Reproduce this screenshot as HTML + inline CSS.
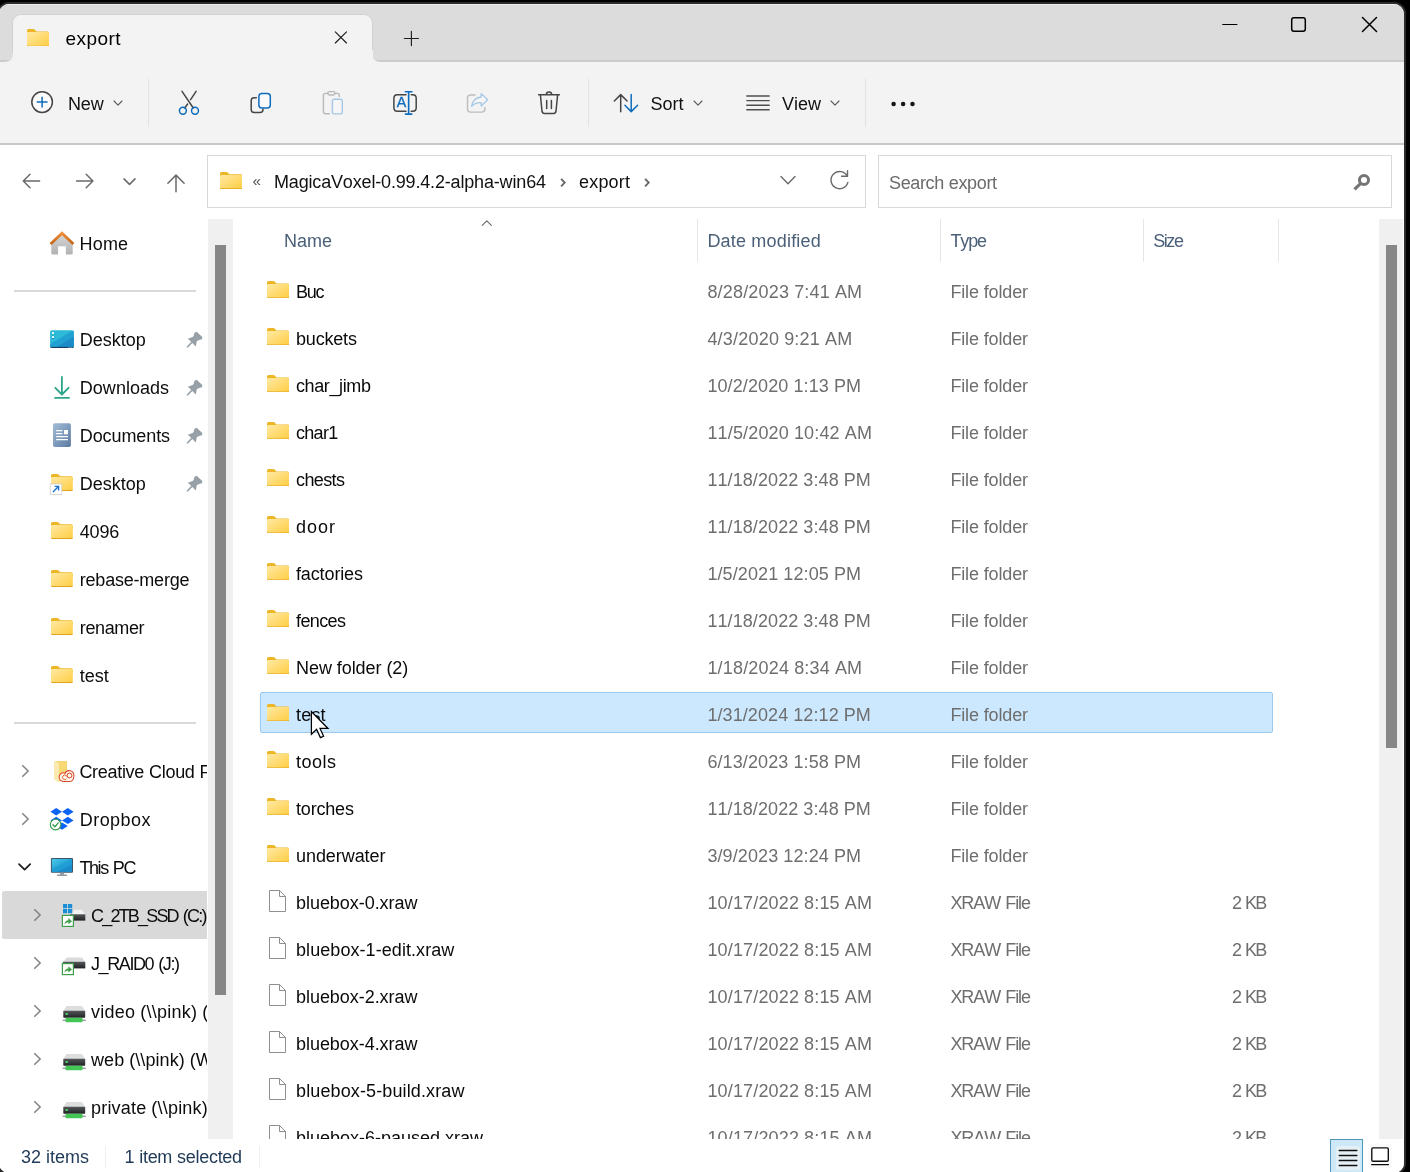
<!DOCTYPE html>
<html lang="en"><head><meta charset="utf-8"><title>export - File Explorer</title>
<style>
html,body{margin:0;padding:0;}
body{width:1410px;height:1172px;background:#000;overflow:hidden;position:relative;font-family:"Liberation Sans", sans-serif;}
.a{position:absolute;display:block;}
.t{position:absolute;white-space:nowrap;line-height:24px;height:24px;font-family:"Liberation Sans", sans-serif;font-kerning:none;}
#win{position:absolute;left:-3px;top:2px;width:1405px;height:1168.6px;border:2px solid #2d2d2d;border-radius:12px;background:#fff;overflow:hidden;box-sizing:content-box;}
#inner{will-change:transform;position:absolute;left:1px;top:-4px;width:1410px;height:1180px;}
</style></head><body>
<div id="win"><div id="inner">
<svg class="a" width="0" height="0" style="left:0;top:0"><defs><linearGradient id="fg" x1="0" y1="0" x2="1" y2="1"><stop offset="0" stop-color="#ffe9a3"/><stop offset="1" stop-color="#ffcd42"/></linearGradient></defs></svg>

<div class="a" style="left:-2px;top:0;width:1412px;height:61px;background:#dcdcdc"></div>
<div class="a" style="left:-2px;top:4px;width:1412px;height:1px;background:#ececec"></div>
<div class="a" style="left:0;top:60px;width:1410px;height:2px;background:#cbcbcb"></div>
<div class="a" style="left:0;top:62px;width:1410px;height:81px;background:#f3f3f3"></div>
<div class="a" style="left:0;top:143px;width:1410px;height:2px;background:#c7c7c7"></div>
<div class="a" style="left:12px;top:14px;width:359px;height:38px;background:#f3f3f3;border-radius:9px 9px 0 0;border:1px solid #d2d2d2;border-bottom:none;box-sizing:content-box"></div>
<div class="a" style="left:13px;top:50px;width:359.6px;height:13px;background:#f3f3f3"></div>
<svg class="a" style="left:4px;top:53px" width="9" height="9" viewBox="0 0 9 9"><path d="M9 0V9H0Q9 9 9 0Z" fill="#f3f3f3"/></svg>
<svg class="a" style="left:372.4px;top:53px" width="9" height="9" viewBox="0 0 9 9"><path d="M0 0V9H9Q0 9 0 0Z" fill="#f3f3f3"/></svg>
<svg class="a" style="left:27.2px;top:28.7px" width="22.2" height="17.8" viewBox="0 0.6 23 17.5" preserveAspectRatio="none"><path d="M0 2.2Q0 0.6 1.6 0.6H6.6Q7.4 0.6 8 1.2L9.8 3H21.4Q23 3 23 4.6V8H0Z" fill="#edb626"/><path d="M0 4.9Q0 3.6 1.3 3.6H21.7Q23 3.6 23 4.9V16.6Q23 17.9 21.7 17.9H1.3Q0 17.9 0 16.6Z" fill="url(#fg)"/><path d="M0 16.2V16.8Q0 18.1 1.3 18.1H21.7Q23 18.1 23 16.8V16.2Q23 17.1 21.7 17.1H1.3Q0 17.1 0 16.2Z" fill="#dfa41f"/></svg>
<span class="t " style="left:65.5px;top:27px;font-size:19px;color:#000;letter-spacing:0.438px;">export</span>
<svg class="a" style="left:332px;top:29px" width="18" height="18" viewBox="332 29 18 18"><path d="M335.3 31.8L346.5 43M346.5 31.8L335.3 43" stroke="#1f1f1f" stroke-width="1.15" fill="none" stroke-linecap="round"/></svg>
<svg class="a" style="left:402px;top:29px" width="20" height="20" viewBox="402 29 20 20"><path d="M411.4 31.4V45.6M404.3 38.5H418.5" stroke="#1f1f1f" stroke-width="1.15" fill="none" stroke-linecap="round"/></svg>
<svg class="a" style="left:1221px;top:16px" width="18" height="18" viewBox="0 0 18 18"><path d="M1.7 8.5H15.9" stroke="#000" stroke-width="1.2" stroke-linecap="round"/></svg>
<svg class="a" style="left:1290px;top:16px" width="18" height="18" viewBox="0 0 18 18"><rect x="1.7" y="1.7" width="13.6" height="13.6" rx="2.2" fill="none" stroke="#000" stroke-width="1.5"/></svg>
<svg class="a" style="left:1361px;top:16px" width="18" height="18" viewBox="0 0 18 18"><path d="M1.5 1.5L15.5 15.5M15.5 1.5L1.5 15.5" stroke="#000" stroke-width="1.5" stroke-linecap="round"/></svg>
<svg class="a" style="left:28px;top:88px" width="30" height="30" viewBox="28 88 30 30"><circle cx="42.1" cy="102.1" r="10.3" fill="#fbfbfb" stroke="#454545" stroke-width="1.5"/><path d="M37.2 102.1H47M42.1 97.2V107" stroke="#0f6cbd" stroke-width="1.5" stroke-linecap="round"/></svg>
<span class="t " style="left:68px;top:92px;font-size:18px;color:#111;letter-spacing:-0.155px;">New</span>
<svg class="a" style="left:113px;top:100px" width="10" height="6.2" viewBox="-1 -1 10 6.2"><path d="M0 0L4.0 4.2L8 0" fill="none" stroke="#5a5a5a" stroke-width="1.1" stroke-linecap="round" stroke-linejoin="round"/></svg>
<div class="a" style="left:148px;top:79px;width:1px;height:48px;background:#e2e2e2"></div>
<svg class="a" style="left:176px;top:88px" width="28" height="30" viewBox="176 88 28 30"><path d="M182 91.3L193.3 108M196.1 91.3L190.6 99.6M187.6 104L184.7 108" stroke="#454545" stroke-width="1.5" stroke-linecap="round" fill="none"/><circle cx="182.9" cy="110.7" r="3.45" fill="none" stroke="#0f6cbd" stroke-width="1.5"/><circle cx="195" cy="110.7" r="3.45" fill="none" stroke="#0f6cbd" stroke-width="1.5"/></svg>
<svg class="a" style="left:248px;top:90px" width="26" height="26" viewBox="248 90 26 26"><path d="M256.3 97.8H254.2Q251.2 97.8 251.2 100.8V109.5Q251.2 112.5 254.2 112.5H260Q263 112.5 263 109.5V109.3" fill="none" stroke="#454545" stroke-width="1.5" stroke-linecap="round"/><rect x="258.9" y="93.5" width="11.4" height="14.4" rx="3" fill="#fafafa" stroke="#0f6cbd" stroke-width="1.5"/></svg>
<svg class="a" style="left:320px;top:88px" width="26" height="30" viewBox="320 88 26 30"><path d="M329.3 113.8H325.6Q323.4 113.8 323.4 111.6V95.4Q323.4 93.4 325.6 93.4H327.8M335 93.4H337.2Q339.3 93.4 339.3 95.4V96.6" fill="none" stroke="#b9b9b9" stroke-width="1.4" stroke-linecap="round"/><rect x="327.8" y="91.6" width="7.2" height="3.4" rx="1.7" fill="none" stroke="#b9b9b9" stroke-width="1.4"/><rect x="332.4" y="99.3" width="9.9" height="14.6" rx="2" fill="#f6f6f6" stroke="#a6c8e6" stroke-width="1.4"/></svg>
<svg class="a" style="left:390px;top:88px" width="30" height="30" viewBox="390 88 30 30"><path d="M406 94.8H397.4Q393.9 94.8 393.9 98.3V107.7Q393.9 111.2 397.4 111.2H406M411.2 94.8H412.7Q416.2 94.8 416.2 98.3V107.7Q416.2 111.2 412.7 111.2H411.2" fill="none" stroke="#454545" stroke-width="1.5" stroke-linecap="round"/><path d="M405.4 91.8H411.9M405.4 114.1H411.9M408.65 91.8V114.1" stroke="#0f6cbd" stroke-width="1.6" stroke-linecap="round" fill="none"/><text x="401.4" y="107.2" font-family="Liberation Sans, sans-serif" font-size="14.2" text-anchor="middle" fill="#0f6cbd" stroke="#0f6cbd" stroke-width="0.35">A</text></svg>
<svg class="a" style="left:464px;top:90px" width="28" height="26" viewBox="464 90 28 26"><path d="M475 95H470.6Q467.5 95 467.5 98V109Q467.5 112.1 470.6 112.1H481.8Q484.9 112.1 484.9 109V107.5" fill="none" stroke="#bdbdbd" stroke-width="1.4" stroke-linecap="round"/><path d="M481.2 93.6L487.6 99.8L481.2 106V102.6Q475.5 102 471.6 106.4Q472.6 98.2 481.2 97Z" fill="#f6f6f6" stroke="#a6c8e6" stroke-width="1.3" stroke-linejoin="round"/></svg>
<svg class="a" style="left:535px;top:88px" width="28" height="30" viewBox="535 88 28 30"><path d="M538.6 94.8H559.4M546.3 94.6Q546.3 91.9 549 91.9Q551.7 91.9 551.7 94.6M540.4 95L542 111.2Q542.3 113.4 544.5 113.4H553.5Q555.7 113.4 556 111.2L557.6 95M546.7 100.6V108.4M551.4 100.6V108.4" fill="none" stroke="#454545" stroke-width="1.5" stroke-linecap="round" stroke-linejoin="round"/></svg>
<div class="a" style="left:588px;top:79px;width:1px;height:48px;background:#e2e2e2"></div>
<svg class="a" style="left:611px;top:90px" width="30" height="26" viewBox="611 90 30 26"><path d="M620.7 111.7V94.7M614.3 101L620.7 94.6L627.1 101" fill="none" stroke="#454545" stroke-width="1.5" stroke-linecap="round" stroke-linejoin="round"/><path d="M631.2 94.6V111.6M624.9 105.3L631.2 111.6L637.6 105.3" fill="none" stroke="#0f6cbd" stroke-width="1.5" stroke-linecap="round" stroke-linejoin="round"/></svg>
<span class="t " style="left:650.5px;top:92px;font-size:18px;color:#111;letter-spacing:-0.004px;">Sort</span>
<svg class="a" style="left:693px;top:100px" width="10" height="6.2" viewBox="-1 -1 10 6.2"><path d="M0 0L4.0 4.2L8 0" fill="none" stroke="#5a5a5a" stroke-width="1.1" stroke-linecap="round" stroke-linejoin="round"/></svg>
<svg class="a" style="left:744px;top:92px" width="28" height="22" viewBox="744 92 28 22"><path d="M746.8 96H769.2M746.8 100.6H769.2M746.8 105.2H769.2M746.8 109.8H769.2" stroke="#4f4f4f" stroke-width="1.4" stroke-linecap="round"/></svg>
<span class="t " style="left:782px;top:92px;font-size:18px;color:#111;letter-spacing:-0.005px;">View</span>
<svg class="a" style="left:830px;top:100px" width="10" height="6.2" viewBox="-1 -1 10 6.2"><path d="M0 0L4.0 4.2L8 0" fill="none" stroke="#5a5a5a" stroke-width="1.1" stroke-linecap="round" stroke-linejoin="round"/></svg>
<div class="a" style="left:865px;top:79px;width:1px;height:48px;background:#e2e2e2"></div>
<svg class="a" style="left:888px;top:98px" width="30" height="12" viewBox="888 98 30 12"><circle cx="893.6" cy="103.9" r="2.25" fill="#151515"/><circle cx="903.1" cy="103.9" r="2.25" fill="#151515"/><circle cx="912.5" cy="103.9" r="2.25" fill="#151515"/></svg>
<svg class="a" style="left:20px;top:170px" width="24" height="22" viewBox="20 170 24 22"><path d="M39.6 181H23.4M30 174.3L23.3 181L30 187.7" fill="none" stroke="#6a6a6a" stroke-width="1.5" stroke-linecap="round" stroke-linejoin="round"/></svg>
<svg class="a" style="left:74px;top:170px" width="24" height="22" viewBox="74 170 24 22"><path d="M76.6 181H92.8M86.2 174.3L92.9 181L86.2 187.7" fill="none" stroke="#6a6a6a" stroke-width="1.5" stroke-linecap="round" stroke-linejoin="round"/></svg>
<svg class="a" style="left:121px;top:174px" width="18" height="14" viewBox="121 174 18 14"><path d="M124 178.9L129.5 184.4L135 178.9" fill="none" stroke="#6a6a6a" stroke-width="1.5" stroke-linecap="round" stroke-linejoin="round"/></svg>
<svg class="a" style="left:164px;top:170px" width="24" height="26" viewBox="164 170 24 26"><path d="M176 191.8V175.2M167.9 183.2L176 175.1L184.1 183.2" fill="none" stroke="#6a6a6a" stroke-width="1.5" stroke-linecap="round" stroke-linejoin="round"/></svg>
<div class="a" style="left:207px;top:155px;width:657px;height:51px;border:1px solid #d9d9d9;background:#fff;box-sizing:content-box"></div>
<svg class="a" style="left:220px;top:171.6px" width="22.2" height="17.2" viewBox="0 0.6 23 17.5" preserveAspectRatio="none"><path d="M0 2.2Q0 0.6 1.6 0.6H6.6Q7.4 0.6 8 1.2L9.8 3H21.4Q23 3 23 4.6V8H0Z" fill="#edb626"/><path d="M0 4.9Q0 3.6 1.3 3.6H21.7Q23 3.6 23 4.9V16.6Q23 17.9 21.7 17.9H1.3Q0 17.9 0 16.6Z" fill="url(#fg)"/><path d="M0 16.2V16.8Q0 18.1 1.3 18.1H21.7Q23 18.1 23 16.8V16.2Q23 17.1 21.7 17.1H1.3Q0 17.1 0 16.2Z" fill="#dfa41f"/></svg>
<span class="t " style="left:252.5px;top:169px;font-size:15px;color:#4a4a4a;">«</span>
<span class="t " style="left:274px;top:170px;font-size:18px;color:#111;letter-spacing:-0.167px;">MagicaVoxel-0.99.4.2-alpha-win64</span>
<svg class="a" style="left:556px;top:175px" width="12" height="14" viewBox="556 175 12 14"><path d="M561.1 178.9L564.7 182.6L561.1 186.3" fill="none" stroke="#686868" stroke-width="1.9" stroke-linecap="butt" stroke-linejoin="miter"/></svg>
<span class="t " style="left:579px;top:170px;font-size:18px;color:#111;letter-spacing:0.194px;">export</span>
<svg class="a" style="left:640px;top:175px" width="12" height="14" viewBox="640 175 12 14"><path d="M645.1 178.9L648.7 182.6L645.1 186.3" fill="none" stroke="#686868" stroke-width="1.9" stroke-linecap="butt" stroke-linejoin="miter"/></svg>
<svg class="a" style="left:778px;top:173px" width="20" height="16" viewBox="778 173 20 16"><path d="M781 176.6L788 183.8L795 176.6" fill="none" stroke="#6a6a6a" stroke-width="1.4" stroke-linecap="round" stroke-linejoin="round"/></svg>
<svg class="a" style="left:827px;top:168px" width="24" height="24" viewBox="827 168 24 24"><path d="M847.3 176.2A8.6 8.6 0 1 0 847.9 182.4" fill="none" stroke="#6a6a6a" stroke-width="1.4" stroke-linecap="round"/><path d="M841.6 176.3H847.5V170.6" fill="none" stroke="#6a6a6a" stroke-width="1.4" stroke-linecap="round" stroke-linejoin="round"/></svg>
<div class="a" style="left:878px;top:155px;width:512px;height:51px;border:1px solid #d9d9d9;background:#fff;box-sizing:content-box"></div>
<span class="t " style="left:889px;top:171px;font-size:18px;color:#6b6b6b;letter-spacing:-0.369px;word-spacing:0.369px;">Search export</span>
<svg class="a" style="left:1350px;top:172px" width="24" height="22" viewBox="1350 172 24 22"><circle cx="1364" cy="180" r="4.55" fill="none" stroke="#747474" stroke-width="3"/><path d="M1361.2 182.9L1354.5 189.3" stroke="#747474" stroke-width="3.2" stroke-linecap="butt"/></svg>
<div class="a" style="left:0;top:215px;width:207px;height:924px;overflow:hidden"><div class="a" style="left:0;top:-215px;width:400px;height:1172px">
<div class="a" style="left:2px;top:891px;width:206px;height:47.7px;background:#d9d9d9;border-radius:2.5px 0 0 2.5px"></div>
<div class="a" style="left:14px;top:290.3px;width:182px;height:1.4px;background:#d9d9d9"></div>
<div class="a" style="left:14px;top:722.3px;width:182px;height:1.4px;background:#d9d9d9"></div>
<svg class="a" style="left:48px;top:230px" width="28" height="26" viewBox="48 230 28 26"><defs><linearGradient id="hb" x1="0" y1="0" x2="0" y2="1"><stop offset="0" stop-color="#d6d6d6"/><stop offset="1" stop-color="#b2b2b2"/></linearGradient><linearGradient id="hr" x1="0" y1="0" x2="0" y2="1"><stop offset="0" stop-color="#ee8d35"/><stop offset="1" stop-color="#c7651a"/></linearGradient></defs><path d="M51.3 243.5L62 234L72.7 243.5V253.2Q72.7 254.5 71.4 254.5H65.9V246.2H58.1V254.5H52.6Q51.3 254.5 51.3 253.2Z" fill="url(#hb)"/><path d="M50.6 243.9L62 233.2L73.4 243.9" fill="none" stroke="url(#hr)" stroke-width="2.8" stroke-linecap="butt" stroke-linejoin="miter"/></svg>
<span class="t " style="left:79.6px;top:232px;font-size:18px;color:#0c0c0c;letter-spacing:0.161px;">Home</span>
<svg class="a" style="left:49px;top:329px" width="26" height="20" viewBox="49 329 26 20"><defs><clipPath id="dkc"><rect x="50.1" y="330.2" width="23.7" height="17.7" rx="1.9"/></clipPath></defs><g clip-path="url(#dkc)"><rect x="50" y="330" width="24" height="18" fill="#2db9d8"/><path d="M50 344L74 330V348H50Z" fill="#21a1d2"/><path d="M55.2 348L74 336.6V348Z" fill="#1c8bc8"/><rect x="50" y="330" width="24" height="0.9" fill="#5cc9dd" opacity="0.7"/><rect x="50" y="346.9" width="24" height="1.1" fill="#143f66"/><rect x="68.6" y="346.9" width="0.8" height="1.1" fill="#8fd0ea"/><rect x="70.7" y="346.9" width="0.8" height="1.1" fill="#8fd0ea"/></g><rect x="52" y="332.1" width="2" height="2" fill="#e8fbff"/><rect x="52" y="334.1" width="2" height="0.6" fill="#2fae7c"/><rect x="52" y="336.1" width="2" height="1.9" fill="#e8fbff"/><rect x="52" y="338" width="2" height="0.6" fill="#1a6fc4"/></svg>
<span class="t " style="left:79.8px;top:328px;font-size:18px;color:#0c0c0c;letter-spacing:-0.006px;">Desktop</span>
<svg class="a" style="left:184px;top:328.7px" width="22" height="22" viewBox="184 328.7 22 22"><g transform="translate(180 325.00)"><path d="M14.5 7.7Q15 6.6 16.4 6.8Q17.4 7 18 7.6L22 11.4Q22.6 12.4 22.3 13.1Q22 14 20.9 14.2L17.7 15.3Q16.8 15.8 16.6 16.9L15.9 20.6Q15.7 21.1 15.3 20.7L12.3 17.7L8 22.1Q7.4 22.5 6.9 22Q6.5 21.5 7 20.9L11.2 16.5L8.1 13.6Q7.8 13.2 8.3 13.1L12 12Q13 11.6 13.6 10.6Z" fill="#96a0a6"/></g></svg>
<svg class="a" style="left:52px;top:374px" width="20" height="26" viewBox="52 374 20 26"><path d="M61.9 376.9V394.2M55.3 387.8L61.9 394.5L68.6 387.8M55 397.8H69.1" fill="none" stroke="#2ca58b" stroke-width="1.8" stroke-linecap="round" stroke-linejoin="round"/></svg>
<span class="t " style="left:79.8px;top:376px;font-size:18px;color:#0c0c0c;letter-spacing:0.031px;">Downloads</span>
<svg class="a" style="left:184px;top:376.8px" width="22" height="22" viewBox="184 376.8 22 22"><g transform="translate(180 373.10)"><path d="M14.5 7.7Q15 6.6 16.4 6.8Q17.4 7 18 7.6L22 11.4Q22.6 12.4 22.3 13.1Q22 14 20.9 14.2L17.7 15.3Q16.8 15.8 16.6 16.9L15.9 20.6Q15.7 21.1 15.3 20.7L12.3 17.7L8 22.1Q7.4 22.5 6.9 22Q6.5 21.5 7 20.9L11.2 16.5L8.1 13.6Q7.8 13.2 8.3 13.1L12 12Q13 11.6 13.6 10.6Z" fill="#96a0a6"/></g></svg>
<svg class="a" style="left:51px;top:421px" width="22" height="28" viewBox="51 421 22 28"><defs><linearGradient id="dc" x1="0" y1="0" x2="1" y2="1"><stop offset="0" stop-color="#a4bcd6"/><stop offset="0.5" stop-color="#7f9cbd"/><stop offset="1" stop-color="#5b7a9e"/></linearGradient></defs><rect x="53" y="423.2" width="17.9" height="23.8" rx="1.8" fill="url(#dc)"/><path d="M56.2 430.6H62.4M56.2 433.6H62.4M56.2 436.6H68M56.2 439.6H68" stroke="#fff" stroke-width="1.3"/><rect x="64" y="430" width="4" height="4.3" fill="#fff"/></svg>
<span class="t " style="left:79.8px;top:424px;font-size:18px;color:#0c0c0c;letter-spacing:-0.092px;">Documents</span>
<svg class="a" style="left:184px;top:424.8px" width="22" height="22" viewBox="184 424.8 22 22"><g transform="translate(180 421.10)"><path d="M14.5 7.7Q15 6.6 16.4 6.8Q17.4 7 18 7.6L22 11.4Q22.6 12.4 22.3 13.1Q22 14 20.9 14.2L17.7 15.3Q16.8 15.8 16.6 16.9L15.9 20.6Q15.7 21.1 15.3 20.7L12.3 17.7L8 22.1Q7.4 22.5 6.9 22Q6.5 21.5 7 20.9L11.2 16.5L8.1 13.6Q7.8 13.2 8.3 13.1L12 12Q13 11.6 13.6 10.6Z" fill="#96a0a6"/></g></svg>
<svg class="a" style="left:51.1px;top:474.1px" width="21.8" height="17" viewBox="0 0.6 23 17.5" preserveAspectRatio="none"><path d="M0 2.2Q0 0.6 1.6 0.6H6.6Q7.4 0.6 8 1.2L9.8 3H21.4Q23 3 23 4.6V8H0Z" fill="#edb626"/><path d="M0 4.9Q0 3.6 1.3 3.6H21.7Q23 3.6 23 4.9V16.6Q23 17.9 21.7 17.9H1.3Q0 17.9 0 16.6Z" fill="url(#fg)"/><path d="M0 16.2V16.8Q0 18.1 1.3 18.1H21.7Q23 18.1 23 16.8V16.2Q23 17.1 21.7 17.1H1.3Q0 17.1 0 16.2Z" fill="#dfa41f"/></svg>
<svg class="a" style="left:49px;top:483px" width="14" height="13" viewBox="49 483 14 13"><rect x="50.2" y="484" width="11.6" height="10.6" fill="#fff" stroke="#c9c9c9" stroke-width="0.7"/><path d="M53 491.9L58.4 486.6M54.6 486.4H58.6V490.4" fill="none" stroke="#1a73c9" stroke-width="1.4"/></svg>
<span class="t " style="left:79.8px;top:472px;font-size:18px;color:#0c0c0c;letter-spacing:-0.006px;">Desktop</span>
<svg class="a" style="left:184px;top:472.8px" width="22" height="22" viewBox="184 472.8 22 22"><g transform="translate(180 469.10)"><path d="M14.5 7.7Q15 6.6 16.4 6.8Q17.4 7 18 7.6L22 11.4Q22.6 12.4 22.3 13.1Q22 14 20.9 14.2L17.7 15.3Q16.8 15.8 16.6 16.9L15.9 20.6Q15.7 21.1 15.3 20.7L12.3 17.7L8 22.1Q7.4 22.5 6.9 22Q6.5 21.5 7 20.9L11.2 16.5L8.1 13.6Q7.8 13.2 8.3 13.1L12 12Q13 11.6 13.6 10.6Z" fill="#96a0a6"/></g></svg>
<svg class="a" style="left:51.1px;top:522.1px" width="21.8" height="17" viewBox="0 0.6 23 17.5" preserveAspectRatio="none"><path d="M0 2.2Q0 0.6 1.6 0.6H6.6Q7.4 0.6 8 1.2L9.8 3H21.4Q23 3 23 4.6V8H0Z" fill="#edb626"/><path d="M0 4.9Q0 3.6 1.3 3.6H21.7Q23 3.6 23 4.9V16.6Q23 17.9 21.7 17.9H1.3Q0 17.9 0 16.6Z" fill="url(#fg)"/><path d="M0 16.2V16.8Q0 18.1 1.3 18.1H21.7Q23 18.1 23 16.8V16.2Q23 17.1 21.7 17.1H1.3Q0 17.1 0 16.2Z" fill="#dfa41f"/></svg>
<span class="t " style="left:79.8px;top:520px;font-size:18px;color:#0c0c0c;letter-spacing:-0.215px;">4096</span>
<svg class="a" style="left:51.1px;top:570.1px" width="21.8" height="17" viewBox="0 0.6 23 17.5" preserveAspectRatio="none"><path d="M0 2.2Q0 0.6 1.6 0.6H6.6Q7.4 0.6 8 1.2L9.8 3H21.4Q23 3 23 4.6V8H0Z" fill="#edb626"/><path d="M0 4.9Q0 3.6 1.3 3.6H21.7Q23 3.6 23 4.9V16.6Q23 17.9 21.7 17.9H1.3Q0 17.9 0 16.6Z" fill="url(#fg)"/><path d="M0 16.2V16.8Q0 18.1 1.3 18.1H21.7Q23 18.1 23 16.8V16.2Q23 17.1 21.7 17.1H1.3Q0 17.1 0 16.2Z" fill="#dfa41f"/></svg>
<span class="t " style="left:79.8px;top:568px;font-size:18px;color:#0c0c0c;letter-spacing:-0.214px;">rebase-merge</span>
<svg class="a" style="left:51.1px;top:618.1px" width="21.8" height="17" viewBox="0 0.6 23 17.5" preserveAspectRatio="none"><path d="M0 2.2Q0 0.6 1.6 0.6H6.6Q7.4 0.6 8 1.2L9.8 3H21.4Q23 3 23 4.6V8H0Z" fill="#edb626"/><path d="M0 4.9Q0 3.6 1.3 3.6H21.7Q23 3.6 23 4.9V16.6Q23 17.9 21.7 17.9H1.3Q0 17.9 0 16.6Z" fill="url(#fg)"/><path d="M0 16.2V16.8Q0 18.1 1.3 18.1H21.7Q23 18.1 23 16.8V16.2Q23 17.1 21.7 17.1H1.3Q0 17.1 0 16.2Z" fill="#dfa41f"/></svg>
<span class="t " style="left:79.8px;top:616px;font-size:18px;color:#0c0c0c;letter-spacing:-0.388px;">renamer</span>
<svg class="a" style="left:51.1px;top:666.1px" width="21.8" height="17" viewBox="0 0.6 23 17.5" preserveAspectRatio="none"><path d="M0 2.2Q0 0.6 1.6 0.6H6.6Q7.4 0.6 8 1.2L9.8 3H21.4Q23 3 23 4.6V8H0Z" fill="#edb626"/><path d="M0 4.9Q0 3.6 1.3 3.6H21.7Q23 3.6 23 4.9V16.6Q23 17.9 21.7 17.9H1.3Q0 17.9 0 16.6Z" fill="url(#fg)"/><path d="M0 16.2V16.8Q0 18.1 1.3 18.1H21.7Q23 18.1 23 16.8V16.2Q23 17.1 21.7 17.1H1.3Q0 17.1 0 16.2Z" fill="#dfa41f"/></svg>
<span class="t " style="left:79.8px;top:664px;font-size:18px;color:#0c0c0c;letter-spacing:-0.037px;">test</span>
<svg class="a" style="left:20px;top:763.3000000000001px" width="12" height="16" viewBox="20 763.3000000000001 12 16"><path d="M22.3 765.60L28.1 771.30L22.3 777.00" fill="none" stroke="#858585" stroke-width="1.6" stroke-linecap="butt" stroke-linejoin="miter"/></svg>
<svg class="a" style="left:52px;top:759px" width="24" height="24" viewBox="52 759 24 24"><path d="M55.2 760.9H67.1V779.2L58.4 781.9V763.7Z" fill="#f6d975"/><path d="M54 761.3L55.2 760.9L58.4 763.7V781.9L54 779.4Z" fill="#fbeab0"/><path d="M63.4 781.4H69.6C72.4 781.4 73.9 778.6 73.9 775.4A4.7 4.7 0 0 0 64.94 773.41Q64.2 772.8 63.4 772.8A4.3 4.3 0 0 0 63.4 781.4Z" fill="#fff6ee" stroke="#d8452b" stroke-width="1.05"/><circle cx="69.5" cy="775.5" r="2.4" fill="none" stroke="#d8452b" stroke-width="1"/><path d="M66.3 779A2.3 2.3 0 1 1 66.1 775.4L68.4 777.9" fill="none" stroke="#df5f1e" stroke-width="1"/></svg>
<span class="t " style="left:79.4px;top:760px;font-size:18px;color:#0c0c0c;letter-spacing:-0.298px;word-spacing:0.298px;">Creative Cloud Files</span>
<svg class="a" style="left:20px;top:811.2px" width="12" height="16" viewBox="20 811.2 12 16"><path d="M22.3 813.50L28.1 819.20L22.3 824.90" fill="none" stroke="#858585" stroke-width="1.6" stroke-linecap="butt" stroke-linejoin="miter"/></svg>
<svg class="a" style="left:48px;top:806px" width="28" height="26" viewBox="48 806 28 26"><path d="M56.2 808L62 811.7L56.2 815.4L50.4 811.7Z M67.8 808L73.6 811.7L67.8 815.4L62 811.7Z M56.2 816.8L62 820.4L56.2 824L50.4 820.4Z M67.8 816.8L73.6 820.4L67.8 824L62 820.4Z M62 822.4L67.8 826L62 829.7L56.2 826Z" fill="#0d63f3"/><circle cx="55.6" cy="824.6" r="5.3" fill="#fff" stroke="#2e9b4b" stroke-width="1.1"/><path d="M53 824.8L54.9 826.7L58.3 822.9" fill="none" stroke="#2e9b4b" stroke-width="1.3" stroke-linecap="round" stroke-linejoin="round"/></svg>
<span class="t " style="left:79.8px;top:808px;font-size:18px;color:#0c0c0c;letter-spacing:0.427px;">Dropbox</span>
<svg class="a" style="left:16px;top:860px" width="18" height="14" viewBox="16 860 18 14"><path d="M19 864.1L24.6 869.7L30.2 864.1" fill="none" stroke="#1c1c1c" stroke-width="1.7" stroke-linecap="round" stroke-linejoin="round"/></svg>
<svg class="a" style="left:49px;top:856px" width="26" height="22" viewBox="49 856 26 22"><defs><linearGradient id="pc" x1="0" y1="0" x2="1" y2="1"><stop offset="0" stop-color="#49cbe8"/><stop offset="0.5" stop-color="#27a5d8"/><stop offset="1" stop-color="#1a82c6"/></linearGradient></defs><rect x="50.9" y="858" width="22.1" height="14.8" rx="1" fill="#3c566b"/><rect x="51.9" y="859" width="20.1" height="12.8" fill="url(#pc)"/><path d="M51.9 868.5L72 859V871.8H51.9Z" fill="#1f9cd3" opacity="0.75"/><path d="M57 871.8L72 864.8V871.8Z" fill="#1b87c8" opacity="0.8"/><rect x="60" y="872.8" width="4" height="2" fill="#8f9aa3"/><rect x="57" y="874.6" width="10" height="1.4" rx="0.6" fill="#8f9aa3"/></svg>
<span class="t " style="left:79.4px;top:856px;font-size:18px;color:#0c0c0c;letter-spacing:-1.403px;word-spacing:1.403px;">This PC</span>
<svg class="a" style="left:31.6px;top:907.2px" width="12" height="16" viewBox="31.6 907.2 12 16"><path d="M33.9 909.50L39.7 915.20L33.9 920.90" fill="none" stroke="#858585" stroke-width="1.6" stroke-linecap="butt" stroke-linejoin="miter"/></svg>
<svg class="a" style="left:60px;top:902px" width="28" height="28" viewBox="60 902 28 28"><defs><linearGradient id="dv" x1="0" y1="0" x2="0" y2="1"><stop offset="0" stop-color="#55585b"/><stop offset="1" stop-color="#1f2123"/></linearGradient></defs><path d="M63 904H67.2V908.2H63ZM68 904H72.2V908.2H68ZM63 909H67.2V913.2H63ZM68 909H72.2V913.2H68Z" fill="#1b8fd6"/><path d="M74 909.8H82L85.3 914.4H72Z" fill="#f2f2f2"/><rect x="70" y="914.3" width="15.3" height="6.3" fill="url(#dv)"/><rect x="62.4" y="915.4" width="11" height="11" fill="#fff" stroke="#3f9e4a" stroke-width="1.2"/><path d="M64.39999999999999 924.4Q64.8 920.4 68.39999999999999 920.1999999999999V918.0L72.0 921.1999999999999L68.39999999999999 924.1999999999999V922.1999999999999Q66.0 922.1999999999999 64.39999999999999 924.4Z" fill="#3f9e4a"/></svg>
<span class="t " style="left:91px;top:904px;font-size:18px;color:#0c0c0c;letter-spacing:-1.803px;word-spacing:1.803px;">C_2TB_SSD (C:)</span>
<svg class="a" style="left:31.6px;top:955.2px" width="12" height="16" viewBox="31.6 955.2 12 16"><path d="M33.9 957.50L39.7 963.20L33.9 968.90" fill="none" stroke="#858585" stroke-width="1.6" stroke-linecap="butt" stroke-linejoin="miter"/></svg>
<svg class="a" style="left:60px;top:954px" width="28" height="24" viewBox="60 954 28 24"><path d="M66.6 957.4H82L85.3 962H63.4Z" fill="#d9dadb"/><rect x="62.8" y="961.8" width="22.5" height="6.6" fill="url(#dv)"/><rect x="62.4" y="963.6" width="11" height="11" fill="#fff" stroke="#3f9e4a" stroke-width="1.2"/><path d="M64.39999999999999 972.6Q64.8 968.6 68.39999999999999 968.4V966.2L72.0 969.4L68.39999999999999 972.4V970.4Q66.0 970.4 64.39999999999999 972.6Z" fill="#3f9e4a"/></svg>
<span class="t " style="left:91px;top:952px;font-size:18px;color:#0c0c0c;letter-spacing:-1.402px;word-spacing:1.402px;">J_RAID0 (J:)</span>
<svg class="a" style="left:31.6px;top:1002.8000000000001px" width="12" height="16" viewBox="31.6 1002.8000000000001 12 16"><path d="M33.9 1005.10L39.7 1010.80L33.9 1016.50" fill="none" stroke="#858585" stroke-width="1.6" stroke-linecap="butt" stroke-linejoin="miter"/></svg>
<svg class="a" style="left:61px;top:1004.7px" width="27" height="20" viewBox="61 1004.7 27 20"><path d="M66.4 1005.7H81.8L85.2 1010.6H63.3Z" fill="#dcdddd"/><rect x="63.3" y="1010.5" width="21.9" height="6.9" rx="0.6" fill="url(#dv)"/><rect x="65.6" y="1012.7" width="2.2" height="2" fill="#49d05e"/><rect x="62.6" y="1019.3000000000001" width="23.2" height="1.5" fill="#9aa0a3"/><rect x="65.6" y="1017.4000000000001" width="16.9" height="4.6" rx="0.8" fill="#43c655"/></svg>
<span class="t " style="left:91px;top:1000px;font-size:18px;color:#0c0c0c;letter-spacing:0.247px;word-spacing:-0.247px;">video (\\pink) (V:)</span>
<svg class="a" style="left:31.6px;top:1050.8px" width="12" height="16" viewBox="31.6 1050.8 12 16"><path d="M33.9 1053.10L39.7 1058.80L33.9 1064.50" fill="none" stroke="#858585" stroke-width="1.6" stroke-linecap="butt" stroke-linejoin="miter"/></svg>
<svg class="a" style="left:61px;top:1052.7px" width="27" height="20" viewBox="61 1052.7 27 20"><path d="M66.4 1053.7H81.8L85.2 1058.6000000000001H63.3Z" fill="#dcdddd"/><rect x="63.3" y="1058.5" width="21.9" height="6.9" rx="0.6" fill="url(#dv)"/><rect x="65.6" y="1060.7" width="2.2" height="2" fill="#49d05e"/><rect x="62.6" y="1067.3" width="23.2" height="1.5" fill="#9aa0a3"/><rect x="65.6" y="1065.4" width="16.9" height="4.6" rx="0.8" fill="#43c655"/></svg>
<span class="t " style="left:91px;top:1048px;font-size:18px;color:#0c0c0c;letter-spacing:0.07px;word-spacing:-0.07px;">web (\\pink) (W:)</span>
<svg class="a" style="left:31.6px;top:1098.8px" width="12" height="16" viewBox="31.6 1098.8 12 16"><path d="M33.9 1101.10L39.7 1106.80L33.9 1112.50" fill="none" stroke="#858585" stroke-width="1.6" stroke-linecap="butt" stroke-linejoin="miter"/></svg>
<svg class="a" style="left:61px;top:1100.7px" width="27" height="20" viewBox="61 1100.7 27 20"><path d="M66.4 1101.7H81.8L85.2 1106.6000000000001H63.3Z" fill="#dcdddd"/><rect x="63.3" y="1106.5" width="21.9" height="6.9" rx="0.6" fill="url(#dv)"/><rect x="65.6" y="1108.7" width="2.2" height="2" fill="#49d05e"/><rect x="62.6" y="1115.3" width="23.2" height="1.5" fill="#9aa0a3"/><rect x="65.6" y="1113.4" width="16.9" height="4.6" rx="0.8" fill="#43c655"/></svg>
<span class="t " style="left:91px;top:1096px;font-size:18px;color:#0c0c0c;letter-spacing:0.192px;word-spacing:-0.192px;">private (\\pink) (P:)</span>
</div></div>
<div class="a" style="left:208px;top:219px;width:25px;height:920px;background:#f0f0f0"></div>
<div class="a" style="left:215px;top:245px;width:11px;height:750px;background:#878787"></div>
<div class="a" style="left:233px;top:215px;width:1146px;height:924px;overflow:hidden"><div class="a" style="left:-233px;top:-215px;width:1410px;height:1172px">
<span class="t " style="left:284px;top:229px;font-size:18px;color:#4a5f78;letter-spacing:-0.005px;">Name</span>
<span class="t " style="left:707.4px;top:229px;font-size:18px;color:#4a5f78;letter-spacing:0.213px;word-spacing:-0.213px;">Date modified</span>
<span class="t " style="left:950.4px;top:229px;font-size:18px;color:#4a5f78;letter-spacing:-1.106px;">Type</span>
<span class="t " style="left:1153.2px;top:229px;font-size:18px;color:#4a5f78;letter-spacing:-1.439px;">Size</span>
<div class="a" style="left:697px;top:219px;width:1px;height:43px;background:#e6e6e6"></div>
<div class="a" style="left:940px;top:219px;width:1px;height:43px;background:#e6e6e6"></div>
<div class="a" style="left:1143px;top:219px;width:1px;height:43px;background:#e6e6e6"></div>
<div class="a" style="left:1278px;top:219px;width:1px;height:43px;background:#e6e6e6"></div>
<svg class="a" style="left:480px;top:218px" width="14" height="10" viewBox="480 218 14 10"><path d="M482.2 225.4L486.8 220.8L491.4 225.4" fill="none" stroke="#6a6a6a" stroke-width="1.1" stroke-linecap="round" stroke-linejoin="round"/></svg>
<div class="a" style="left:260px;top:692px;width:1011px;height:39px;background:#cce8ff;border:1px solid #9ccaee;border-radius:2px;box-sizing:content-box"></div>
<svg class="a" style="left:267px;top:280.9px" width="22.1" height="17.4" viewBox="0 0.6 23 17.5" preserveAspectRatio="none"><path d="M0 2.2Q0 0.6 1.6 0.6H6.6Q7.4 0.6 8 1.2L9.8 3H21.4Q23 3 23 4.6V8H0Z" fill="#edb626"/><path d="M0 4.9Q0 3.6 1.3 3.6H21.7Q23 3.6 23 4.9V16.6Q23 17.9 21.7 17.9H1.3Q0 17.9 0 16.6Z" fill="url(#fg)"/><path d="M0 16.2V16.8Q0 18.1 1.3 18.1H21.7Q23 18.1 23 16.8V16.2Q23 17.1 21.7 17.1H1.3Q0 17.1 0 16.2Z" fill="#dfa41f"/></svg>
<span class="t " style="left:296px;top:280px;font-size:18px;color:#0a0a0a;letter-spacing:-1.209px;">Buc</span>
<span class="t " style="left:707.4px;top:280px;font-size:18px;color:#6e6e6e;letter-spacing:0.185px;word-spacing:-0.185px;">8/28/2023 7:41 AM</span>
<span class="t " style="left:950.4px;top:280px;font-size:18px;color:#6e6e6e;letter-spacing:-0.159px;word-spacing:0.159px;">File folder</span>
<svg class="a" style="left:267px;top:327.9px" width="22.1" height="17.4" viewBox="0 0.6 23 17.5" preserveAspectRatio="none"><path d="M0 2.2Q0 0.6 1.6 0.6H6.6Q7.4 0.6 8 1.2L9.8 3H21.4Q23 3 23 4.6V8H0Z" fill="#edb626"/><path d="M0 4.9Q0 3.6 1.3 3.6H21.7Q23 3.6 23 4.9V16.6Q23 17.9 21.7 17.9H1.3Q0 17.9 0 16.6Z" fill="url(#fg)"/><path d="M0 16.2V16.8Q0 18.1 1.3 18.1H21.7Q23 18.1 23 16.8V16.2Q23 17.1 21.7 17.1H1.3Q0 17.1 0 16.2Z" fill="#dfa41f"/></svg>
<span class="t " style="left:296px;top:327px;font-size:18px;color:#0a0a0a;letter-spacing:-0.189px;">buckets</span>
<span class="t " style="left:707.4px;top:327px;font-size:18px;color:#6e6e6e;letter-spacing:0.211px;word-spacing:-0.211px;">4/3/2020 9:21 AM</span>
<span class="t " style="left:950.4px;top:327px;font-size:18px;color:#6e6e6e;letter-spacing:-0.159px;word-spacing:0.159px;">File folder</span>
<svg class="a" style="left:267px;top:374.9px" width="22.1" height="17.4" viewBox="0 0.6 23 17.5" preserveAspectRatio="none"><path d="M0 2.2Q0 0.6 1.6 0.6H6.6Q7.4 0.6 8 1.2L9.8 3H21.4Q23 3 23 4.6V8H0Z" fill="#edb626"/><path d="M0 4.9Q0 3.6 1.3 3.6H21.7Q23 3.6 23 4.9V16.6Q23 17.9 21.7 17.9H1.3Q0 17.9 0 16.6Z" fill="url(#fg)"/><path d="M0 16.2V16.8Q0 18.1 1.3 18.1H21.7Q23 18.1 23 16.8V16.2Q23 17.1 21.7 17.1H1.3Q0 17.1 0 16.2Z" fill="#dfa41f"/></svg>
<span class="t " style="left:296px;top:374px;font-size:18px;color:#0a0a0a;letter-spacing:-0.392px;">char_jimb</span>
<span class="t " style="left:707.4px;top:374px;font-size:18px;color:#6e6e6e;letter-spacing:0.106px;word-spacing:-0.106px;">10/2/2020 1:13 PM</span>
<span class="t " style="left:950.4px;top:374px;font-size:18px;color:#6e6e6e;letter-spacing:-0.159px;word-spacing:0.159px;">File folder</span>
<svg class="a" style="left:267px;top:421.9px" width="22.1" height="17.4" viewBox="0 0.6 23 17.5" preserveAspectRatio="none"><path d="M0 2.2Q0 0.6 1.6 0.6H6.6Q7.4 0.6 8 1.2L9.8 3H21.4Q23 3 23 4.6V8H0Z" fill="#edb626"/><path d="M0 4.9Q0 3.6 1.3 3.6H21.7Q23 3.6 23 4.9V16.6Q23 17.9 21.7 17.9H1.3Q0 17.9 0 16.6Z" fill="url(#fg)"/><path d="M0 16.2V16.8Q0 18.1 1.3 18.1H21.7Q23 18.1 23 16.8V16.2Q23 17.1 21.7 17.1H1.3Q0 17.1 0 16.2Z" fill="#dfa41f"/></svg>
<span class="t " style="left:296px;top:421px;font-size:18px;color:#0a0a0a;letter-spacing:-0.707px;">char1</span>
<span class="t " style="left:707.4px;top:421px;font-size:18px;color:#6e6e6e;letter-spacing:0.162px;word-spacing:-0.162px;">11/5/2020 10:42 AM</span>
<span class="t " style="left:950.4px;top:421px;font-size:18px;color:#6e6e6e;letter-spacing:-0.159px;word-spacing:0.159px;">File folder</span>
<svg class="a" style="left:267px;top:468.9px" width="22.1" height="17.4" viewBox="0 0.6 23 17.5" preserveAspectRatio="none"><path d="M0 2.2Q0 0.6 1.6 0.6H6.6Q7.4 0.6 8 1.2L9.8 3H21.4Q23 3 23 4.6V8H0Z" fill="#edb626"/><path d="M0 4.9Q0 3.6 1.3 3.6H21.7Q23 3.6 23 4.9V16.6Q23 17.9 21.7 17.9H1.3Q0 17.9 0 16.6Z" fill="url(#fg)"/><path d="M0 16.2V16.8Q0 18.1 1.3 18.1H21.7Q23 18.1 23 16.8V16.2Q23 17.1 21.7 17.1H1.3Q0 17.1 0 16.2Z" fill="#dfa41f"/></svg>
<span class="t " style="left:296px;top:468px;font-size:18px;color:#0a0a0a;letter-spacing:-0.605px;">chests</span>
<span class="t " style="left:707.4px;top:468px;font-size:18px;color:#6e6e6e;letter-spacing:0.088px;word-spacing:-0.088px;">11/18/2022 3:48 PM</span>
<span class="t " style="left:950.4px;top:468px;font-size:18px;color:#6e6e6e;letter-spacing:-0.159px;word-spacing:0.159px;">File folder</span>
<svg class="a" style="left:267px;top:515.9px" width="22.1" height="17.4" viewBox="0 0.6 23 17.5" preserveAspectRatio="none"><path d="M0 2.2Q0 0.6 1.6 0.6H6.6Q7.4 0.6 8 1.2L9.8 3H21.4Q23 3 23 4.6V8H0Z" fill="#edb626"/><path d="M0 4.9Q0 3.6 1.3 3.6H21.7Q23 3.6 23 4.9V16.6Q23 17.9 21.7 17.9H1.3Q0 17.9 0 16.6Z" fill="url(#fg)"/><path d="M0 16.2V16.8Q0 18.1 1.3 18.1H21.7Q23 18.1 23 16.8V16.2Q23 17.1 21.7 17.1H1.3Q0 17.1 0 16.2Z" fill="#dfa41f"/></svg>
<span class="t " style="left:296px;top:515px;font-size:18px;color:#0a0a0a;letter-spacing:1.024px;">door</span>
<span class="t " style="left:707.4px;top:515px;font-size:18px;color:#6e6e6e;letter-spacing:0.088px;word-spacing:-0.088px;">11/18/2022 3:48 PM</span>
<span class="t " style="left:950.4px;top:515px;font-size:18px;color:#6e6e6e;letter-spacing:-0.159px;word-spacing:0.159px;">File folder</span>
<svg class="a" style="left:267px;top:562.9px" width="22.1" height="17.4" viewBox="0 0.6 23 17.5" preserveAspectRatio="none"><path d="M0 2.2Q0 0.6 1.6 0.6H6.6Q7.4 0.6 8 1.2L9.8 3H21.4Q23 3 23 4.6V8H0Z" fill="#edb626"/><path d="M0 4.9Q0 3.6 1.3 3.6H21.7Q23 3.6 23 4.9V16.6Q23 17.9 21.7 17.9H1.3Q0 17.9 0 16.6Z" fill="url(#fg)"/><path d="M0 16.2V16.8Q0 18.1 1.3 18.1H21.7Q23 18.1 23 16.8V16.2Q23 17.1 21.7 17.1H1.3Q0 17.1 0 16.2Z" fill="#dfa41f"/></svg>
<span class="t " style="left:296px;top:562px;font-size:18px;color:#0a0a0a;letter-spacing:-0.129px;">factories</span>
<span class="t " style="left:707.4px;top:562px;font-size:18px;color:#6e6e6e;letter-spacing:0.106px;word-spacing:-0.106px;">1/5/2021 12:05 PM</span>
<span class="t " style="left:950.4px;top:562px;font-size:18px;color:#6e6e6e;letter-spacing:-0.159px;word-spacing:0.159px;">File folder</span>
<svg class="a" style="left:267px;top:609.9px" width="22.1" height="17.4" viewBox="0 0.6 23 17.5" preserveAspectRatio="none"><path d="M0 2.2Q0 0.6 1.6 0.6H6.6Q7.4 0.6 8 1.2L9.8 3H21.4Q23 3 23 4.6V8H0Z" fill="#edb626"/><path d="M0 4.9Q0 3.6 1.3 3.6H21.7Q23 3.6 23 4.9V16.6Q23 17.9 21.7 17.9H1.3Q0 17.9 0 16.6Z" fill="url(#fg)"/><path d="M0 16.2V16.8Q0 18.1 1.3 18.1H21.7Q23 18.1 23 16.8V16.2Q23 17.1 21.7 17.1H1.3Q0 17.1 0 16.2Z" fill="#dfa41f"/></svg>
<span class="t " style="left:296px;top:609px;font-size:18px;color:#0a0a0a;letter-spacing:-0.607px;">fences</span>
<span class="t " style="left:707.4px;top:609px;font-size:18px;color:#6e6e6e;letter-spacing:0.088px;word-spacing:-0.088px;">11/18/2022 3:48 PM</span>
<span class="t " style="left:950.4px;top:609px;font-size:18px;color:#6e6e6e;letter-spacing:-0.159px;word-spacing:0.159px;">File folder</span>
<svg class="a" style="left:267px;top:656.9px" width="22.1" height="17.4" viewBox="0 0.6 23 17.5" preserveAspectRatio="none"><path d="M0 2.2Q0 0.6 1.6 0.6H6.6Q7.4 0.6 8 1.2L9.8 3H21.4Q23 3 23 4.6V8H0Z" fill="#edb626"/><path d="M0 4.9Q0 3.6 1.3 3.6H21.7Q23 3.6 23 4.9V16.6Q23 17.9 21.7 17.9H1.3Q0 17.9 0 16.6Z" fill="url(#fg)"/><path d="M0 16.2V16.8Q0 18.1 1.3 18.1H21.7Q23 18.1 23 16.8V16.2Q23 17.1 21.7 17.1H1.3Q0 17.1 0 16.2Z" fill="#dfa41f"/></svg>
<span class="t " style="left:296px;top:656px;font-size:18px;color:#0a0a0a;letter-spacing:-0.067px;word-spacing:0.067px;">New folder (2)</span>
<span class="t " style="left:707.4px;top:656px;font-size:18px;color:#6e6e6e;letter-spacing:0.185px;word-spacing:-0.185px;">1/18/2024 8:34 AM</span>
<span class="t " style="left:950.4px;top:656px;font-size:18px;color:#6e6e6e;letter-spacing:-0.159px;word-spacing:0.159px;">File folder</span>
<svg class="a" style="left:267px;top:703.9px" width="22.1" height="17.4" viewBox="0 0.6 23 17.5" preserveAspectRatio="none"><path d="M0 2.2Q0 0.6 1.6 0.6H6.6Q7.4 0.6 8 1.2L9.8 3H21.4Q23 3 23 4.6V8H0Z" fill="#edb626"/><path d="M0 4.9Q0 3.6 1.3 3.6H21.7Q23 3.6 23 4.9V16.6Q23 17.9 21.7 17.9H1.3Q0 17.9 0 16.6Z" fill="url(#fg)"/><path d="M0 16.2V16.8Q0 18.1 1.3 18.1H21.7Q23 18.1 23 16.8V16.2Q23 17.1 21.7 17.1H1.3Q0 17.1 0 16.2Z" fill="#dfa41f"/></svg>
<span class="t " style="left:296px;top:703px;font-size:18px;color:#0a0a0a;letter-spacing:0.196px;">test</span>
<span class="t " style="left:707.4px;top:703px;font-size:18px;color:#6e6e6e;letter-spacing:0.088px;word-spacing:-0.088px;">1/31/2024 12:12 PM</span>
<span class="t " style="left:950.4px;top:703px;font-size:18px;color:#6e6e6e;letter-spacing:-0.159px;word-spacing:0.159px;">File folder</span>
<svg class="a" style="left:267px;top:750.9px" width="22.1" height="17.4" viewBox="0 0.6 23 17.5" preserveAspectRatio="none"><path d="M0 2.2Q0 0.6 1.6 0.6H6.6Q7.4 0.6 8 1.2L9.8 3H21.4Q23 3 23 4.6V8H0Z" fill="#edb626"/><path d="M0 4.9Q0 3.6 1.3 3.6H21.7Q23 3.6 23 4.9V16.6Q23 17.9 21.7 17.9H1.3Q0 17.9 0 16.6Z" fill="url(#fg)"/><path d="M0 16.2V16.8Q0 18.1 1.3 18.1H21.7Q23 18.1 23 16.8V16.2Q23 17.1 21.7 17.1H1.3Q0 17.1 0 16.2Z" fill="#dfa41f"/></svg>
<span class="t " style="left:296px;top:750px;font-size:18px;color:#0a0a0a;letter-spacing:0.519px;">tools</span>
<span class="t " style="left:707.4px;top:750px;font-size:18px;color:#6e6e6e;letter-spacing:0.106px;word-spacing:-0.106px;">6/13/2023 1:58 PM</span>
<span class="t " style="left:950.4px;top:750px;font-size:18px;color:#6e6e6e;letter-spacing:-0.159px;word-spacing:0.159px;">File folder</span>
<svg class="a" style="left:267px;top:797.9px" width="22.1" height="17.4" viewBox="0 0.6 23 17.5" preserveAspectRatio="none"><path d="M0 2.2Q0 0.6 1.6 0.6H6.6Q7.4 0.6 8 1.2L9.8 3H21.4Q23 3 23 4.6V8H0Z" fill="#edb626"/><path d="M0 4.9Q0 3.6 1.3 3.6H21.7Q23 3.6 23 4.9V16.6Q23 17.9 21.7 17.9H1.3Q0 17.9 0 16.6Z" fill="url(#fg)"/><path d="M0 16.2V16.8Q0 18.1 1.3 18.1H21.7Q23 18.1 23 16.8V16.2Q23 17.1 21.7 17.1H1.3Q0 17.1 0 16.2Z" fill="#dfa41f"/></svg>
<span class="t " style="left:296px;top:797px;font-size:18px;color:#0a0a0a;letter-spacing:-0.188px;">torches</span>
<span class="t " style="left:707.4px;top:797px;font-size:18px;color:#6e6e6e;letter-spacing:0.088px;word-spacing:-0.088px;">11/18/2022 3:48 PM</span>
<span class="t " style="left:950.4px;top:797px;font-size:18px;color:#6e6e6e;letter-spacing:-0.159px;word-spacing:0.159px;">File folder</span>
<svg class="a" style="left:267px;top:844.9px" width="22.1" height="17.4" viewBox="0 0.6 23 17.5" preserveAspectRatio="none"><path d="M0 2.2Q0 0.6 1.6 0.6H6.6Q7.4 0.6 8 1.2L9.8 3H21.4Q23 3 23 4.6V8H0Z" fill="#edb626"/><path d="M0 4.9Q0 3.6 1.3 3.6H21.7Q23 3.6 23 4.9V16.6Q23 17.9 21.7 17.9H1.3Q0 17.9 0 16.6Z" fill="url(#fg)"/><path d="M0 16.2V16.8Q0 18.1 1.3 18.1H21.7Q23 18.1 23 16.8V16.2Q23 17.1 21.7 17.1H1.3Q0 17.1 0 16.2Z" fill="#dfa41f"/></svg>
<span class="t " style="left:296px;top:844px;font-size:18px;color:#0a0a0a;letter-spacing:-0.062px;">underwater</span>
<span class="t " style="left:707.4px;top:844px;font-size:18px;color:#6e6e6e;letter-spacing:0.106px;word-spacing:-0.106px;">3/9/2023 12:24 PM</span>
<span class="t " style="left:950.4px;top:844px;font-size:18px;color:#6e6e6e;letter-spacing:-0.159px;word-spacing:0.159px;">File folder</span>
<svg class="a" style="left:269px;top:889.8px" width="17" height="22" viewBox="0 0 17 22"><path d="M0.5 0.5H10.5L16.5 6.5V21.5H0.5Z" fill="#fff" stroke="#8f8f8f" stroke-width="1"/><path d="M10.5 0.5V6.5H16.5" fill="none" stroke="#8f8f8f" stroke-width="1"/></svg>
<span class="t " style="left:296px;top:891px;font-size:18px;color:#0a0a0a;letter-spacing:-0.044px;">bluebox-0.xraw</span>
<span class="t " style="left:707.4px;top:891px;font-size:18px;color:#6e6e6e;letter-spacing:0.162px;word-spacing:-0.162px;">10/17/2022 8:15 AM</span>
<span class="t " style="left:950.4px;top:891px;font-size:18px;color:#6e6e6e;letter-spacing:-1.044px;word-spacing:1.044px;">XRAW File</span>
<span class="t " style="left:1232px;top:891px;font-size:18px;color:#6e6e6e;letter-spacing:-1.912px;word-spacing:1.912px;">2 KB</span>
<svg class="a" style="left:269px;top:936.8px" width="17" height="22" viewBox="0 0 17 22"><path d="M0.5 0.5H10.5L16.5 6.5V21.5H0.5Z" fill="#fff" stroke="#8f8f8f" stroke-width="1"/><path d="M10.5 0.5V6.5H16.5" fill="none" stroke="#8f8f8f" stroke-width="1"/></svg>
<span class="t " style="left:296px;top:938px;font-size:18px;color:#0a0a0a;letter-spacing:0.068px;">bluebox-1-edit.xraw</span>
<span class="t " style="left:707.4px;top:938px;font-size:18px;color:#6e6e6e;letter-spacing:0.162px;word-spacing:-0.162px;">10/17/2022 8:15 AM</span>
<span class="t " style="left:950.4px;top:938px;font-size:18px;color:#6e6e6e;letter-spacing:-1.044px;word-spacing:1.044px;">XRAW File</span>
<span class="t " style="left:1232px;top:938px;font-size:18px;color:#6e6e6e;letter-spacing:-1.912px;word-spacing:1.912px;">2 KB</span>
<svg class="a" style="left:269px;top:983.8px" width="17" height="22" viewBox="0 0 17 22"><path d="M0.5 0.5H10.5L16.5 6.5V21.5H0.5Z" fill="#fff" stroke="#8f8f8f" stroke-width="1"/><path d="M10.5 0.5V6.5H16.5" fill="none" stroke="#8f8f8f" stroke-width="1"/></svg>
<span class="t " style="left:296px;top:985px;font-size:18px;color:#0a0a0a;letter-spacing:-0.044px;">bluebox-2.xraw</span>
<span class="t " style="left:707.4px;top:985px;font-size:18px;color:#6e6e6e;letter-spacing:0.162px;word-spacing:-0.162px;">10/17/2022 8:15 AM</span>
<span class="t " style="left:950.4px;top:985px;font-size:18px;color:#6e6e6e;letter-spacing:-1.044px;word-spacing:1.044px;">XRAW File</span>
<span class="t " style="left:1232px;top:985px;font-size:18px;color:#6e6e6e;letter-spacing:-1.912px;word-spacing:1.912px;">2 KB</span>
<svg class="a" style="left:269px;top:1030.8px" width="17" height="22" viewBox="0 0 17 22"><path d="M0.5 0.5H10.5L16.5 6.5V21.5H0.5Z" fill="#fff" stroke="#8f8f8f" stroke-width="1"/><path d="M10.5 0.5V6.5H16.5" fill="none" stroke="#8f8f8f" stroke-width="1"/></svg>
<span class="t " style="left:296px;top:1032px;font-size:18px;color:#0a0a0a;letter-spacing:-0.044px;">bluebox-4.xraw</span>
<span class="t " style="left:707.4px;top:1032px;font-size:18px;color:#6e6e6e;letter-spacing:0.162px;word-spacing:-0.162px;">10/17/2022 8:15 AM</span>
<span class="t " style="left:950.4px;top:1032px;font-size:18px;color:#6e6e6e;letter-spacing:-1.044px;word-spacing:1.044px;">XRAW File</span>
<span class="t " style="left:1232px;top:1032px;font-size:18px;color:#6e6e6e;letter-spacing:-1.912px;word-spacing:1.912px;">2 KB</span>
<svg class="a" style="left:269px;top:1077.8px" width="17" height="22" viewBox="0 0 17 22"><path d="M0.5 0.5H10.5L16.5 6.5V21.5H0.5Z" fill="#fff" stroke="#8f8f8f" stroke-width="1"/><path d="M10.5 0.5V6.5H16.5" fill="none" stroke="#8f8f8f" stroke-width="1"/></svg>
<span class="t " style="left:296px;top:1079px;font-size:18px;color:#0a0a0a;letter-spacing:0.127px;">bluebox-5-build.xraw</span>
<span class="t " style="left:707.4px;top:1079px;font-size:18px;color:#6e6e6e;letter-spacing:0.162px;word-spacing:-0.162px;">10/17/2022 8:15 AM</span>
<span class="t " style="left:950.4px;top:1079px;font-size:18px;color:#6e6e6e;letter-spacing:-1.044px;word-spacing:1.044px;">XRAW File</span>
<span class="t " style="left:1232px;top:1079px;font-size:18px;color:#6e6e6e;letter-spacing:-1.912px;word-spacing:1.912px;">2 KB</span>
<svg class="a" style="left:269px;top:1124.8px" width="17" height="22" viewBox="0 0 17 22"><path d="M0.5 0.5H10.5L16.5 6.5V21.5H0.5Z" fill="#fff" stroke="#8f8f8f" stroke-width="1"/><path d="M10.5 0.5V6.5H16.5" fill="none" stroke="#8f8f8f" stroke-width="1"/></svg>
<span class="t " style="left:296px;top:1126px;font-size:18px;color:#0a0a0a;letter-spacing:-0.011px;">bluebox-6-paused.xraw</span>
<span class="t " style="left:707.4px;top:1126px;font-size:18px;color:#6e6e6e;letter-spacing:0.162px;word-spacing:-0.162px;">10/17/2022 8:15 AM</span>
<span class="t " style="left:950.4px;top:1126px;font-size:18px;color:#6e6e6e;letter-spacing:-1.044px;word-spacing:1.044px;">XRAW File</span>
<span class="t " style="left:1232px;top:1126px;font-size:18px;color:#6e6e6e;letter-spacing:-1.912px;word-spacing:1.912px;">2 KB</span>
<svg class="a" style="left:308px;top:708px" width="26" height="34" viewBox="308 708 26 34"><g transform="translate(311.4 711.6)"><path d="M0 0V22.6L5.2 17.8L9 26L12.2 24.6L8.6 16.9H16.6Z" fill="#fff" stroke="#000" stroke-width="1.25" stroke-linejoin="miter"/></g></svg>
</div></div>
<div class="a" style="left:1379px;top:219px;width:24px;height:920px;background:#f0f0f0"></div>
<div class="a" style="left:1386px;top:245px;width:11px;height:503px;background:#878787"></div>
<div class="a" style="left:-2px;top:1139px;width:1412px;height:40px;background:#fff"></div>
<span class="t " style="left:21px;top:1145px;font-size:18px;color:#1f3a57;letter-spacing:-0.005px;word-spacing:0.005px;">32 items</span>
<span class="t " style="left:124.5px;top:1145px;font-size:18px;color:#1f3a57;letter-spacing:-0.289px;word-spacing:0.289px;">1 item selected</span>
<div class="a" style="left:105px;top:1146px;width:1px;height:22px;background:#f0f0f0"></div>
<div class="a" style="left:259px;top:1146px;width:1px;height:22px;background:#f0f0f0"></div>
<div class="a" style="left:1330px;top:1139px;width:33px;height:36px;background:#cde8f6;border:1px solid #4f97b8;box-sizing:border-box"></div>
<div class="a" style="left:1336px;top:1146px;width:23.6px;height:24px;background:#e4f0f6;border-radius:2.5px"></div>
<svg class="a" style="left:1336px;top:1146px" width="24" height="24" viewBox="1336 1146 24 24"><path d="M1339.2 1150.5H1356.9M1339.2 1155.5H1356.9M1339.2 1160.5H1356.9M1339.2 1165.5H1356.9" stroke="#111" stroke-width="1.3" stroke-linecap="round"/></svg>
<div class="a" style="left:1368px;top:1144px;width:23.6px;height:23.6px;background:#fafafa;border-radius:2px"></div>
<svg class="a" style="left:1368px;top:1144px" width="26" height="26" viewBox="1368 1144 26 26"><rect x="1371.8" y="1147.8" width="16.5" height="13.4" rx="1.2" fill="#fff" stroke="#0c0c0c" stroke-width="1.35"/><path d="M1371.6 1164.6H1388.5" stroke="#0c0c0c" stroke-width="1.3" stroke-linecap="round"/></svg>
</div></div>
</body></html>
